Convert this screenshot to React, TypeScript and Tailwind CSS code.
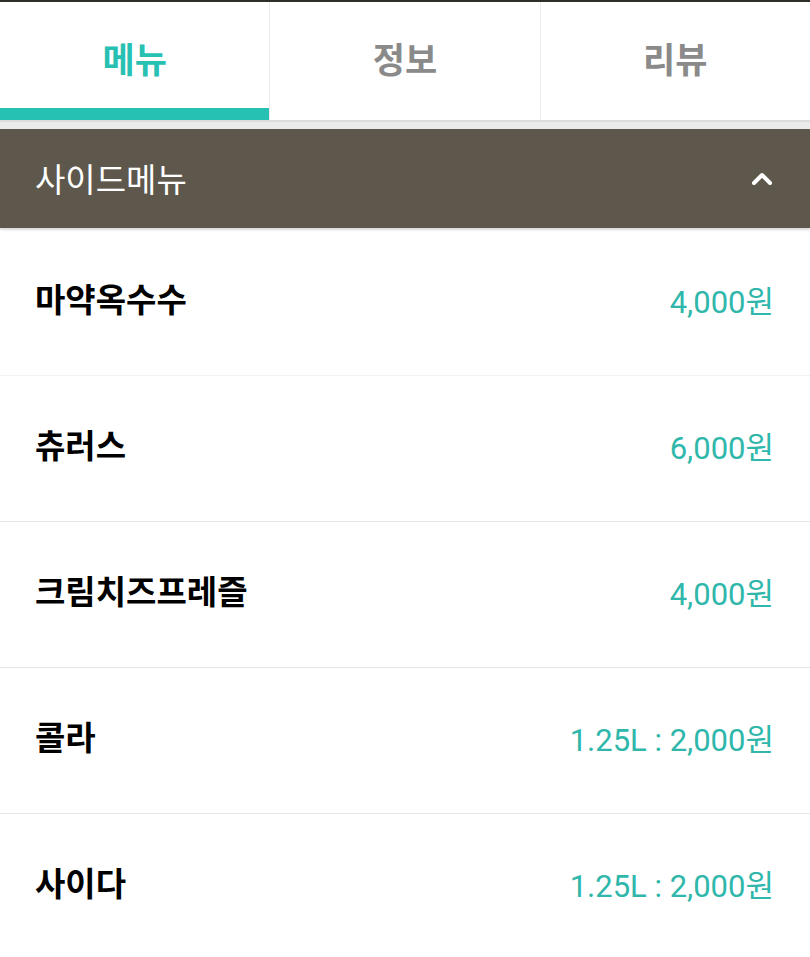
import { ChevronUp } from "lucide-react";

const items = [
  { name: "마약옥수수", price: "4,000원" },
  { name: "츄러스", price: "6,000원" },
  { name: "크림치즈프레즐", price: "4,000원" },
  { name: "콜라", price: "1.25L : 2,000원" },
  { name: "사이다", price: "1.25L : 2,000원" },
];

const kr = "font-['Noto_Sans_CJK_KR','Noto_Sans',sans-serif]";

export default function App() {
  return (
    <div className={`w-[810px] h-[957px] overflow-hidden bg-white ${kr}`}>
      {/* Tabs */}
      <div className="border-t-2 border-[#2f2f2a]">
        <div className="flex h-[120px] border-b-2 border-[#dcdcdc]">
          <div className="flex-1 flex flex-col">
            <div className="flex-1 flex items-center justify-center text-[35px] font-bold text-[#27c1b4] pt-[6px]">
              메뉴
            </div>
            <div className="h-[12px] bg-[#27c1b4]" />
          </div>
          <div className="flex-1 flex items-center justify-center text-[35px] font-bold text-[#8a8a8a] border-l border-[#ececec] pb-[6px]">
            정보
          </div>
          <div className="flex-1 flex items-center justify-center text-[35px] font-bold text-[#8a8a8a] border-l border-[#ececec] pb-[6px]">
            리뷰
          </div>
        </div>
      </div>

      {/* Section */}
      <div className="pt-[7px] bg-[#ebebeb]">
        <div className="h-[99px] bg-[#5d574c] flex items-center justify-between pl-[35px] pr-[32px] shadow-[0_2px_2px_rgba(0,0,0,0.15)]">
          <span className="text-white text-[33px]">사이드메뉴</span>
          <ChevronUp className="w-[32px] h-[32px] text-white" strokeWidth={3} />
        </div>
      </div>

      <div className="pt-[1px]">
        {items.map((it, i) => (
          <div
            key={it.name}
            className={`h-[146px] flex items-center justify-between pl-[35px] pr-[36px] ${
              i > 0 ? (i === 1 ? "border-t border-[#f2f2f2]" : "border-t border-[#e6e6e6]") : ""
            }`}
          >
            <span className="text-[33px] font-bold text-black pb-[7px]">{it.name}</span>
            <span className="text-[31px] text-[#2fb7ab] font-['Roboto','Noto_Sans_CJK_KR',sans-serif] pt-[2px]">
              {it.price}
            </span>
          </div>
        ))}
      </div>
    </div>
  );
}
